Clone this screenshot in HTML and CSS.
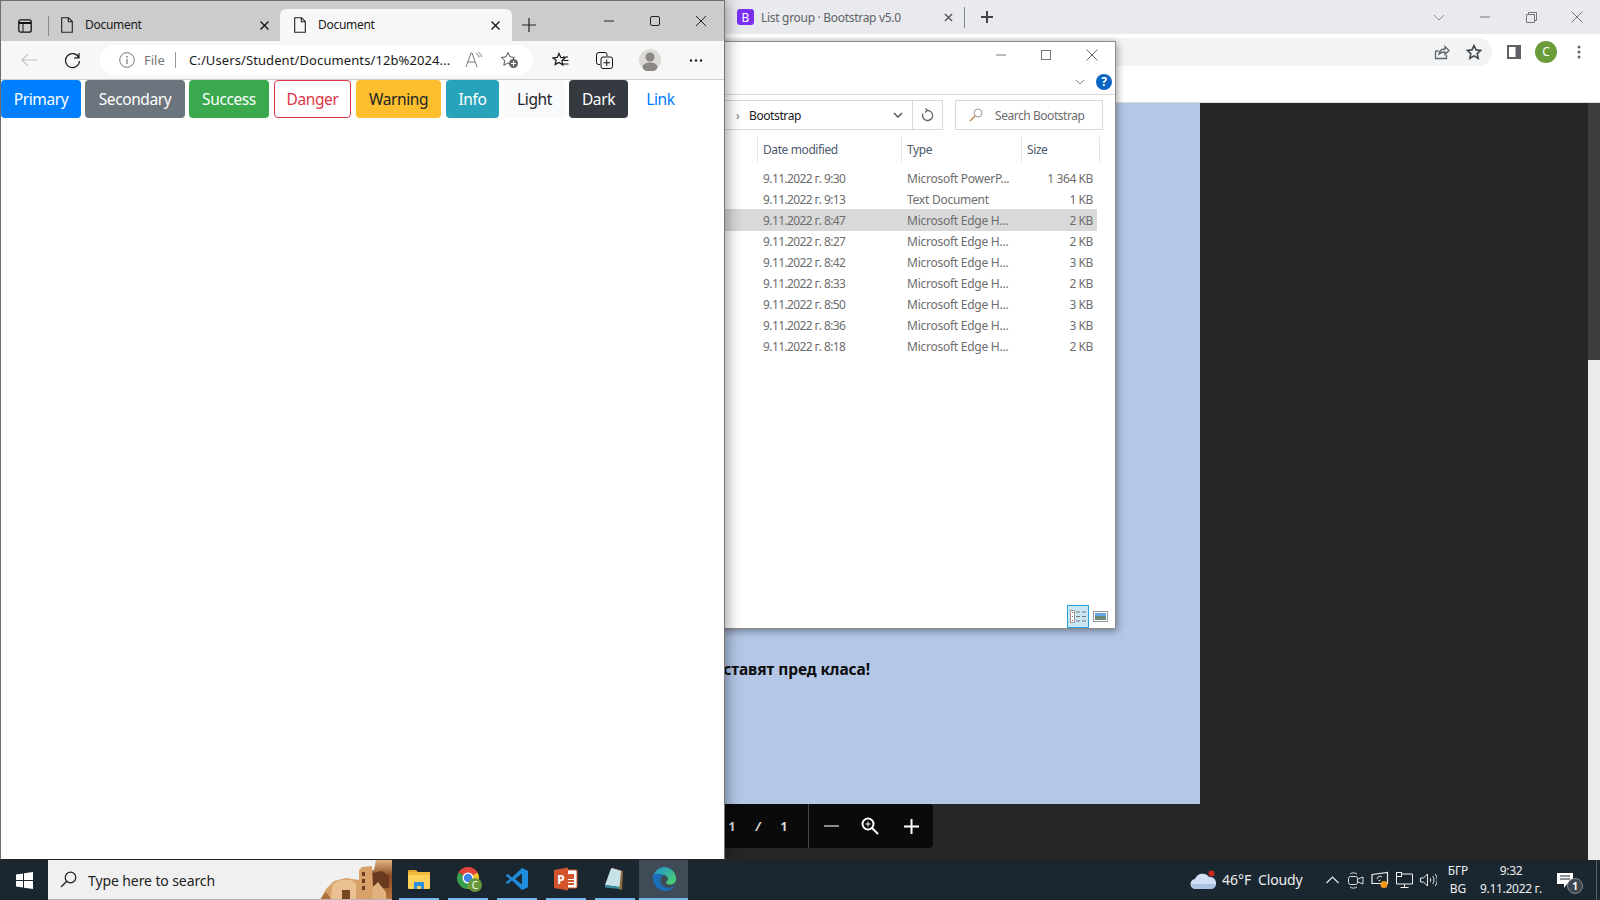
FILE: index.html
```html
<!DOCTYPE html>
<html lang="en">
<head>
    <meta charset="UTF-8">
    <title>Document</title>
    <link rel="stylesheet" href="styles.css">
</head>
<body>
<div class="desktop">

    <!-- chrome window with the pdf, furthest back -->
    <div class="chrome">
        <div class="chrome-tabs">
            <svg class="favicon" viewBox="0 0 17 16"><rect width="17" height="16" rx="3" fill="#7b2ff2"/><text x="8.5" y="12.5" text-anchor="middle" font-size="12" font-family="Noto Sans" fill="#fff">B</text></svg>
            <span class="chrome-tab-title">List group · Bootstrap v5.0</span>
            <svg class="chrome-tab-close" viewBox="0 0 10 10"><path d="M1 1l8 8M9 1l-8 8" stroke="#555" stroke-width="1.5"/></svg>
            <span class="chrome-tab-sep"></span>
            <svg class="chrome-new" viewBox="0 0 12 12"><path d="M6 0v12M0 6h12" stroke="#444" stroke-width="2"/></svg>
            <div class="chrome-controls">
                <svg class="caret" viewBox="0 0 12 7"><path d="M1 1l5 5 5-5" fill="none" stroke="#8a8a8a"/></svg>
                <span class="ctl"><svg width="10" height="2"><path d="M0 1h10" stroke="#777"/></svg></span>
                <span class="ctl"><svg width="11" height="11"><path d="M.5 2.5h8v8h-8zM2.5 2.5v-2h8v8h-2" fill="none" stroke="#777"/></svg></span>
                <span class="ctl"><svg width="12" height="12"><path d="M.5.5l11 11M11.500.5l-11 11" stroke="#777"/></svg></span>
            </div>
        </div>
        <div class="chrome-bar">
            <div class="omnibox">
                <svg class="omni-ico" viewBox="0 0 16 16"><path d="M1.500 7v7.500h11V11M1.500 7h3M5 10c.5-3 3-5 6-5V2.500l4 4-4 4V8c-2.500 0-4.500.5-6 2z" fill="none" stroke="#5f6368" stroke-width="1.300"/></svg>
                <svg class="omni-ico" viewBox="0 0 16 16"><path d="M8 1.500l2 4.400 4.700.5-3.500 3.200 1 4.700L8 11.900l-4.200 2.400 1-4.700L1.300 6.400 6 5.900z" fill="none" stroke="#44474a" stroke-width="1.600"/></svg>
            </div>
            <svg class="panel-ico" viewBox="0 0 14 14"><rect width="14" height="14" fill="#5f6368"/><rect x="2" y="2" width="6.500" height="10" fill="#fff"/></svg>
            <span class="chrome-avatar">C</span>
            <svg class="menu-ico" viewBox="0 0 4 14"><circle cx="2" cy="2" r="1.500" fill="#5f6368"/><circle cx="2" cy="7" r="1.500" fill="#5f6368"/><circle cx="2" cy="12" r="1.500" fill="#5f6368"/></svg>
        </div>
        <div class="chrome-bookmarks"></div>
        <div class="viewer">
            <div class="viewer-main">
                <div class="pdf-page">
                    <p class="pdf-text">ставят пред класа!</p>
                </div>
                <div class="pdf-tools">
                    <span class="pdf-num pdf-num-a">1</span>
                    <span class="pdf-num pdf-num-b">/</span>
                    <span class="pdf-num pdf-num-c">1</span>
                    <span class="pdf-tool pdf-minus"><svg width="15" height="2"><path d="M0 1h15" stroke="#8a8a8a" stroke-width="2"/></svg></span>
                    <span class="pdf-tool pdf-zoom"><svg width="18" height="18" viewBox="0 0 18 18"><circle cx="7" cy="7" r="5.500" fill="none" stroke="#fff" stroke-width="2"/><path d="M11 11l6 6" stroke="#fff" stroke-width="2"/><path d="M7 4.500v5M4.500 7h5" stroke="#fff"/></svg></span>
                    <span class="pdf-tool pdf-plus"><svg width="15" height="15"><path d="M7.500 0v15M0 7.500h15" stroke="#fff" stroke-width="2"/></svg></span>
                </div>
            </div>
            <div class="scrollbar"><div class="scroll-thumb"></div></div>
        </div>
    </div>

    <!-- explorer window -->
    <div class="explorer">
        <div class="x-title">
            <span class="x-ctl"><svg width="10" height="2"><path d="M0 1h10" stroke="#777"/></svg></span>
            <span class="x-ctl"><svg width="10" height="10"><rect x=".5" y=".5" width="9" height="9" fill="none" stroke="#777"/></svg></span>
            <span class="x-ctl"><svg width="12" height="12"><path d="M.5.5l11 11M11.500.5l-11 11" stroke="#666"/></svg></span>
        </div>
        <div class="x-ribbon">
            <svg class="x-chevron" viewBox="0 0 10 6"><path d="M1 1l4 4 4-4" fill="none" stroke="#888"/></svg>
            <span class="x-help">?</span>
        </div>
        <div class="x-nav">
            <div class="x-address">
                <span class="x-crumb-arrow">›</span>
                <span class="x-crumb">Bootstrap</span>
                <svg class="x-drop" viewBox="0 0 10 6"><path d="M1 1l4 4 4-4" fill="none" stroke="#555" stroke-width="1.500"/></svg>
                <span class="x-refresh"><svg width="13" height="14" viewBox="0 0 13 14"><path d="M6.500 2.500a5 5 0 1 1-4.500 3M6.500 2.500l-2-2M6.500 2.500l-2.500 2" fill="none" stroke="#666" stroke-width="1.300"/></svg></span>
            </div>
            <div class="x-search">
                <svg width="14" height="14" viewBox="0 0 14 14"><circle cx="9" cy="5" r="4" fill="none" stroke="#999"/><path d="M6 8l-5 5" stroke="#b5803c" stroke-width="1.300"/></svg>
                <span>Search Bootstrap</span>
            </div>
        </div>
        <div class="x-head">
            <span></span>
            <span class="x-col">Date modified</span>
            <span class="x-col">Type</span>
            <span class="x-col x-col-last">Size</span>
        </div>
        <div class="x-list">
            <div class="x-row"><span></span><span class="x-date">9.11.2022 г. 9:30</span><span class="x-type">Microsoft PowerP...</span><span class="x-size">1 364 KB</span></div>
            <div class="x-row"><span></span><span class="x-date">9.11.2022 г. 9:13</span><span class="x-type">Text Document</span><span class="x-size">1 KB</span></div>
            <div class="x-row x-selected"><span></span><span class="x-date">9.11.2022 г. 8:47</span><span class="x-type">Microsoft Edge H...</span><span class="x-size">2 KB</span></div>
            <div class="x-row"><span></span><span class="x-date">9.11.2022 г. 8:27</span><span class="x-type">Microsoft Edge H...</span><span class="x-size">2 KB</span></div>
            <div class="x-row"><span></span><span class="x-date">9.11.2022 г. 8:42</span><span class="x-type">Microsoft Edge H...</span><span class="x-size">3 KB</span></div>
            <div class="x-row"><span></span><span class="x-date">9.11.2022 г. 8:33</span><span class="x-type">Microsoft Edge H...</span><span class="x-size">2 KB</span></div>
            <div class="x-row"><span></span><span class="x-date">9.11.2022 г. 8:50</span><span class="x-type">Microsoft Edge H...</span><span class="x-size">3 KB</span></div>
            <div class="x-row"><span></span><span class="x-date">9.11.2022 г. 8:36</span><span class="x-type">Microsoft Edge H...</span><span class="x-size">3 KB</span></div>
            <div class="x-row"><span></span><span class="x-date">9.11.2022 г. 8:18</span><span class="x-type">Microsoft Edge H...</span><span class="x-size">2 KB</span></div>
        </div>
        <div class="x-foot">
            <span class="x-view x-view-on"><svg width="17" height="13" viewBox="0 0 17 13"><rect x=".5" y=".5" width="4" height="12" fill="#fff" stroke="#999"/><rect x="2" y="2" width="1" height="1" fill="#666"/><rect x="2" y="6" width="1" height="1" fill="#666"/><rect x="2" y="10" width="1" height="1" fill="#c33"/><path d="M6 2h4M12 2h4M6 6.500h4M12 6.500h4M6 11h4M12 11h4" stroke="#777"/></svg></span>
            <span class="x-view"><svg width="15" height="11" viewBox="0 0 15 11"><rect x=".5" y=".5" width="14" height="10" fill="#fff" stroke="#999"/><rect x="2" y="2" width="11" height="3" fill="#6aa7e8"/><rect x="2" y="5" width="11" height="4" fill="#6d8a78"/></svg></span>
        </div>
    </div>

    <!-- edge window, in front -->
    <div class="edge">
        <div class="edge-tabs">
            <svg class="edge-sidebar" viewBox="0 0 14 14"><rect x=".8" y=".8" width="12.400" height="12.400" rx="2" fill="none" stroke="#111" stroke-width="1.300"/><path d="M1 4h12" stroke="#111" stroke-width="2"/><path d="M5 4v9" stroke="#111"/></svg>
            <span class="edge-tabsep"></span>
            <div class="tab tab-back">
                <svg class="tab-doc" viewBox="0 0 12 16"><path d="M.7.7h6.800l3.800 3.800v10.800H.7zM7.300.7v4h4" fill="none" stroke="#222" stroke-width="1.100"/></svg>
                <span class="tab-title">Document</span>
                <svg class="tab-close" viewBox="0 0 9 9"><path d="M.5.5l8 8M8.500.5l-8 8" stroke="#111" stroke-width="1.300"/></svg>
            </div>
            <div class="tab tab-on">
                <svg class="tab-doc" viewBox="0 0 12 16"><path d="M.7.7h6.800l3.800 3.800v10.800H.7zM7.300.7v4h4" fill="none" stroke="#222" stroke-width="1.100"/></svg>
                <span class="tab-title">Document</span>
                <svg class="tab-close" viewBox="0 0 9 9"><path d="M.5.5l8 8M8.500.5l-8 8" stroke="#111" stroke-width="1.300"/></svg>
            </div>
            <svg class="edge-new" viewBox="0 0 14 14"><path d="M7 0v14M0 7h14" stroke="#222" stroke-width="1.200"/></svg>
            <div class="edge-controls">
                <span class="e-ctl"><svg width="10" height="2"><path d="M0 1h10" stroke="#222"/></svg></span>
                <span class="e-ctl"><svg width="10" height="10"><rect x=".5" y=".5" width="9" height="9" rx="1.500" fill="none" stroke="#222"/></svg></span>
                <span class="e-ctl"><svg width="10" height="10"><path d="M0 0l10 10M10 0L0 10" stroke="#222"/></svg></span>
            </div>
        </div>
        <div class="edge-bar">
            <svg class="e-back" viewBox="0 0 16 14"><path d="M16 7H1M7 1L1 7l6 6" fill="none" stroke="#c4c4c4" stroke-width="1.200"/></svg>
            <svg class="e-reload" viewBox="0 0 17 17"><path d="M14.800 5.500A7 7 0 1 0 15.500 9M15 1v4.800h-4.800" fill="none" stroke="#1c1c1c" stroke-width="1.200"/></svg>
            <div class="pill">
                <svg class="pill-info" viewBox="0 0 16 16"><circle cx="8" cy="8" r="7.300" fill="none" stroke="#777"/><path d="M8 7v5" stroke="#777" stroke-width="1.200"/><circle cx="8" cy="4.800" r=".9" fill="#777"/></svg>
                <span class="pill-file">File</span>
                <span class="pill-sep"></span>
                <span class="pill-url">C:/Users/Student/Documents/12b%2024...</span>
                <svg class="pill-read" viewBox="0 0 18 16"><path d="M1 15L6 1h1l5 14M3 10h7" fill="none" stroke="#777" stroke-width="1"/><path d="M11 1.500c2 .5 3 2 3 4M13.500.5c2 1 3 2.500 3 4.500" fill="none" stroke="#777"/></svg>
                <svg class="pill-fav" viewBox="0 0 19 18"><path d="M8 1.500l2 4.400 4.700.5-3.500 3.200 1 4.700L8 11.900l-4.200 2.400 1-4.700L1.300 6.400 6 5.900z" fill="none" stroke="#555"/><circle cx="13.500" cy="12.500" r="4.500" fill="#666"/><path d="M13.500 10v5M11 12.500h5" stroke="#fff"/></svg>
            </div>
            <svg class="e-favs" viewBox="0 0 17 16"><path d="M7 1.500l1.800 3.900 4.200.5-3.100 2.900.9 4.200L7 10.400l-3.800 2.100.9-4.200L1 5.900l4.200-.5z" fill="none" stroke="#111" stroke-width="1.200"/><path d="M11 5h5M11.500 8.500h5M10 12h6.500" stroke="#111"/></svg>
            <svg class="e-coll" viewBox="0 0 17 17"><path d="M4 12.500H2.500a2 2 0 0 1-2-2V3a2.500 2.500 0 0 1 2.500-2.500h6A2 2 0 0 1 11 2.500V4" fill="none" stroke="#111"/><rect x="5" y="5" width="11.500" height="11.500" rx="2" fill="none" stroke="#111"/><path d="M10.750 7.500v6.500M7.500 10.750H14" stroke="#111"/></svg>
            <span class="e-avatar"><svg width="22" height="22" viewBox="0 0 22 22"><circle cx="11" cy="11" r="11" fill="#dcdad7"/><circle cx="11" cy="8" r="4.500" fill="#8b8884"/><ellipse cx="11" cy="18" rx="7.500" ry="4.500" fill="#8b8884"/></svg></span>
            <svg class="e-more" viewBox="0 0 14 3"><circle cx="2" cy="1.500" r="1.200" fill="#222"/><circle cx="7" cy="1.500" r="1.200" fill="#222"/><circle cx="12" cy="1.500" r="1.200" fill="#222"/></svg>
        </div>
        <div class="edge-page">
            <button class="btn btn-primary">Primary</button>
            <button class="btn btn-secondary">Secondary</button>
            <button class="btn btn-success">Success</button>
            <button class="btn btn-danger">Danger</button>
            <button class="btn btn-warning">Warning</button>
            <button class="btn btn-info">Info</button>
            <button class="btn btn-light">Light</button>
            <button class="btn btn-dark">Dark</button>
            <button class="btn btn-link">Link</button>
        </div>
    </div>

    <!-- taskbar -->
    <div class="taskbar">
        <span class="start"><svg width="17" height="17" viewBox="0 0 17 17"><path d="M0 2.400L7 1.400v6.600H0zM8 1.200L17 0v8H8zM0 9h7v6.600L0 14.600zM8 9h9v8l-9-1.200z" fill="#fff"/></svg></span>
        <div class="search">
            <svg class="search-ico" viewBox="0 0 17 17"><circle cx="10.500" cy="6.500" r="5.300" fill="none" stroke="#222" stroke-width="1.200"/><path d="M6.700 10.300L1 16" stroke="#222" stroke-width="1.300"/></svg>
            <span class="search-text">Type here to search</span>
            <svg class="search-art" viewBox="0 0 72 40">
                <defs><linearGradient id="artBack" x1="0" y1="0" x2="0" y2="1"><stop offset="0" stop-color="#e4b384"/><stop offset=".4" stop-color="#8a4c24"/><stop offset="1" stop-color="#b9723c"/></linearGradient></defs>
                <path d="M56 0h16v40H44V12l10-2z" fill="url(#artBack)"/>
                <path d="M52 13l10-2 7 5v12H52z" fill="#6a3a1e"/>
                <path d="M0 40l6-11 8-8 12-3 13 2V10l3-3 10-1 1 20 7 1 8 13z" fill="#d8a16a"/>
                <path d="M13 24l7-4h11l5 4v16H10z" fill="#e9c193"/>
                <rect x="22" y="30" width="8" height="10" fill="#7a4522"/>
                <path d="M0 40l6-8 6 8z" fill="#b0703a"/>
                <rect x="42" y="12" width="3" height="4" fill="#6e3d1d"/>
                <rect x="42" y="19" width="3" height="4" fill="#6e3d1d"/>
                <rect x="42" y="26" width="3" height="4" fill="#6e3d1d"/>
                <path d="M53 27l5-5 3 4 5 6v8H52z" fill="#e2b17f"/>
            </svg>
        </div>
        <div class="task-icons">
            <span class="task"><svg width="22" height="20" viewBox="0 0 22 20"><path d="M0 2a1 1 0 0 1 1-1h7l2 2H0z" fill="#e2a52b"/><rect y="3" width="22" height="17" rx="1" fill="#fbd35a"/><rect y="3" width="22" height="3" fill="#f2bd3f"/><path d="M6 20v-7h10v7h-3v-3H9v3z" fill="#2a8fdc"/></svg></span>
            <span class="task task-chrome"><svg width="26" height="26" viewBox="0 0 26 26"><path d="M12 12L2.470 6.500A11 11 0 0 1 21.530 6.500z" fill="#e2463a"/><path d="M12 12L21.530 6.500A11 11 0 0 1 12 23z" fill="#fbc02d"/><path d="M12 12L12 23A11 11 0 0 1 2.470 6.500z" fill="#3a9f4c"/><circle cx="12" cy="12" r="5.500" fill="#fff"/><circle cx="12" cy="12" r="4.200" fill="#3f83ea"/><circle cx="19" cy="19" r="7" fill="#66983a"/><text x="19" y="22.500" text-anchor="middle" font-size="10" font-family="Noto Sans" fill="#fff">C</text></svg></span>
            <span class="task"><svg width="24" height="24" viewBox="0 0 24 24"><path d="M17 1l6 2.800v16.400L17 23 7 13.500 2.800 17 .5 15.500 5 12 .5 8.500 2.800 7 7 10.500z" fill="#1f8ddb"/><path d="M17 6.500L10 12l7 5.500z" fill="#1a2731"/></svg></span>
            <span class="task"><svg width="24" height="24" viewBox="0 0 24 24"><path d="M9 3h13a1 1 0 0 1 1 1v16a1 1 0 0 1-1 1H9z" fill="#fff" stroke="#d2552d"/><path d="M14 7h6v5h-6z" fill="#d2552d"/><path d="M14 14h6M14 17h6" stroke="#d2552d" stroke-width="2"/><path d="M0 3l14-2.500v23L0 21z" fill="#d2552d"/><text x="7" y="16.500" text-anchor="middle" font-size="12" font-weight="700" font-family="Noto Sans" fill="#fff">P</text></svg></span>
            <span class="task"><svg width="24" height="24" viewBox="0 0 24 24"><path d="M9 1l11 3-1 19-4-1z" fill="#8f6d3a"/><path d="M8 1.500l10 2.500-1.500 16-14.500-2z" fill="#c8e3e8"/><path d="M2 18l14.500 2 .5 2-15-1.500z" fill="#3c8f9f"/><path d="M8 1.500l1-.5 9 3h-1z" fill="#eef5f6"/></svg></span>
            <span class="task task-on"><svg width="26" height="26" viewBox="0 0 26 26"><defs><linearGradient id="edgeTop" x1="0" y1="0" x2="1" y2="1"><stop offset="0" stop-color="#1e8fd0"/><stop offset="1" stop-color="#4fd86a"/></linearGradient></defs><path d="M13 1a12 12 0 0 1 12 12c0 4-3 5.500-6 5.500-3 0-4-1-4-2.500 3-1 3-6-2-7-5-.5-9 2-11 5A12 12 0 0 1 13 1z" fill="url(#edgeTop)"/><path d="M2 9C0 19 8 25 14 25c5 0 8-2 10-5-5 3-12 2-14-2-2-4 0-8 3-9C8 7 4 8 2 9z" fill="#1c6eb7"/></svg></span>
        </div>
        <div class="tray">
            <svg class="tray-cloud" viewBox="0 0 26 20"><path d="M6 19a5 5 0 0 1-1-10 8 8 0 0 1 14-2 6 6 0 0 1 2 12z" fill="#cfe0f2"/><path d="M1 14a5 5 0 0 0 5 5h15a5 5 0 0 0 5-5z" fill="#aac4e3"/><circle cx="21.500" cy="3.500" r="3" fill="#c8291e"/></svg>
            <span class="tray-temp">46°F</span>
            <span class="tray-cond">Cloudy</span>
            <span class="tray-ico"><svg width="13" height="8" viewBox="0 0 13 8"><path d="M.5 7l6-6 6 6" fill="none" stroke="#e8e8e8" stroke-width="1.200"/></svg></span>
            <span class="tray-ico"><svg width="16" height="17" viewBox="0 0 16 17"><rect x=".5" y="4.500" width="9" height="8" rx="2" fill="none" stroke="#ddd"/><path d="M10 7l5-2v7l-5-2M2 2c2-1.500 5-1.500 7 0M2 15c2 1.500 5 1.500 7 0" fill="none" stroke="#ddd"/></svg></span>
            <span class="tray-ico"><svg width="18" height="18" viewBox="0 0 18 18"><path d="M1 3.500L16.500 1.500v11H1z" fill="none" stroke="#eee" stroke-width="1.200"/><path d="M6 8a3 3 0 0 1 5-2M9.500 9l-2 1" fill="none" stroke="#eee"/><circle cx="13" cy="13.500" r="3.500" fill="#f59a12"/></svg></span>
            <span class="tray-ico"><svg width="17" height="17" viewBox="0 0 17 17"><rect x=".5" y=".5" width="5" height="4" fill="#1a2731" stroke="#eee"/><path d="M.5 3v9h16V2H5.500M8.500 12v3.500M4.500 15.500h8" fill="none" stroke="#eee"/></svg></span>
            <span class="tray-ico"><svg width="17" height="14" viewBox="0 0 17 14"><path d="M.5 5h3l4-4v12l-4-4h-3zM10 5c1 1 1 3 0 4M12.500 3c2 2 2 6 0 8M15 1c3 3 3 9 0 12" fill="none" stroke="#eee"/></svg></span>
            <div class="tray-ime"><span>БГР</span><span>BG</span></div>
            <div class="tray-clock"><span>9:32</span><span>9.11.2022 г.</span></div>
            <div class="tray-notif">
                <svg width="17" height="15" viewBox="0 0 17 15"><path d="M0 0h16v11h-6l-3 4v-4H0z" fill="#fff"/><path d="M3 3h10M3 6h10" stroke="#1a2731"/></svg>
                <span class="notif-badge">1</span>
            </div>
            <span class="tray-edge"></span>
        </div>
    </div>
</div>
</body>
</html>
```

FILE: styles.css
```css
* {
    margin: 0;
    padding: 0;
    box-sizing: border-box;
}

body {
    font-family: "Noto Sans", sans-serif;
    overflow: hidden;
    background: #262626;
}

svg {
    display: block;
    flex-shrink: 0;
}

.desktop {
    position: relative;
    width: 1600px;
    height: 900px;
    overflow: hidden;
}

/* chrome */
.chrome {
    position: absolute;
    left: 724px;
    top: 0;
    width: 876px;
    height: 860px;
    display: flex;
    flex-direction: column;
}

.chrome-tabs {
    height: 34px;
    background: #e8eaed;
    display: flex;
    align-items: center;
    padding-left: 13px;
}

.favicon {
    width: 17px;
    height: 16px;
}

.chrome-tab-title {
    margin-left: 7px;
    width: 180px;
    font-size: 12px;
    letter-spacing: -0.3px;
    color: #5f6368;
    white-space: nowrap;
}

.chrome-tab-close {
    width: 9px;
    height: 9px;
    margin-left: 3px;
}

.chrome-tab-sep {
    width: 1px;
    height: 21px;
    background: #80868b;
    margin-left: 11px;
}

.chrome-new {
    width: 12px;
    height: 12px;
    margin-left: 16px;
}

.chrome-controls {
    margin-left: auto;
    display: flex;
    align-items: center;
}

.caret {
    width: 12px;
    height: 7px;
    margin-right: 17px;
}

.ctl {
    width: 46px;
    height: 34px;
    display: flex;
    align-items: center;
    justify-content: center;
}

.chrome-bar {
    height: 34px;
    background: #fff;
    padding-top: 2px;
    display: flex;
    align-items: center;
}

.omnibox {
    width: 768px;
    height: 28px;
    background: #f1f3f4;
    border-radius: 0 14px 14px 0;
    display: flex;
    align-items: center;
    justify-content: flex-end;
    gap: 16px;
    padding-right: 10px;
}

.omni-ico {
    width: 16px;
    height: 16px;
}

.panel-ico {
    width: 14px;
    height: 14px;
    margin-left: 15px;
}

.chrome-avatar {
    width: 22px;
    height: 22px;
    margin-left: 14px;
    border-radius: 50%;
    background: #6a9c3a;
    color: #fff;
    font-size: 12px;
    line-height: 22px;
    text-align: center;
}

.menu-ico {
    width: 4px;
    height: 14px;
    margin-left: 20px;
}

.chrome-bookmarks {
    height: 35px;
    background: #fff;
    border-bottom: 1px solid #dadce0;
}

.viewer {
    flex: 1;
    display: flex;
    background: #262626;
}

.viewer-main {
    flex: 1;
    position: relative;
}

.pdf-page {
    width: 476px;
    height: 701px;
    background: #b4c7e7;
    padding: 554px 330px 0 0;
}

.pdf-text {
    display: flex;
    justify-content: flex-end;
    font-size: 15.5px;
    font-weight: 700;
    letter-spacing: -0.1px;
    line-height: 24px;
    color: #0d0d0d;
    white-space: nowrap;
}

.pdf-tools {
    position: absolute;
    left: 0;
    top: 701px;
    width: 209px;
    height: 44px;
    background: #0a0a0a;
    border-radius: 0 4px 4px 0;
    display: flex;
    align-items: center;
}

.pdf-num {
    color: #ddd;
    font-size: 12px;
    font-weight: 700;
    text-align: center;
}

.pdf-num-a {
    width: 16px;
}

.pdf-num-b {
    width: 36px;
    font-style: italic;
}

.pdf-num-c {
    width: 16px;
    margin-right: 16px;
}

.pdf-tool {
    height: 44px;
    display: flex;
    align-items: center;
    justify-content: center;
}

.pdf-minus {
    width: 46px;
    border-left: 1px solid #444;
}

.pdf-zoom {
    width: 32px;
}

.pdf-plus {
    width: 47px;
    padding-left: 3px;
}

.scrollbar {
    width: 12px;
    background: #3c3c3c;
    padding-top: 257px;
}

.scroll-thumb {
    height: 100%;
    background: #ebebeb;
}

/* explorer */
.explorer {
    position: absolute;
    left: 700px;
    top: 41px;
    width: 416px;
    height: 588px;
    background: #fff;
    border: 1px solid #8c8c8c;
    box-shadow: 1px 2px 8px rgba(0, 0, 0, 0.4);
    display: flex;
    flex-direction: column;
}

.x-title {
    height: 26px;
    display: flex;
    justify-content: flex-end;
    align-items: center;
    padding-right: 1px;
}

.x-ctl {
    width: 45px;
    display: flex;
    justify-content: center;
}

.x-ctl:last-child {
    margin-left: 1px;
}

.x-ribbon {
    height: 27px;
    display: flex;
    justify-content: flex-end;
    align-items: center;
    border-bottom: 1px solid #dadada;
    padding: 1px 3px 0 0;
    gap: 11px;
}

.x-chevron {
    width: 10px;
    height: 6px;
}

.x-help {
    width: 16px;
    height: 16px;
    border-radius: 50%;
    background: #0a66c2;
    color: #fff;
    font-size: 12px;
    font-weight: 700;
    line-height: 16px;
    text-align: center;
}

.x-nav {
    display: flex;
    margin-top: 5px;
    height: 30px;
    font-size: 12px;
    padding-right: 12px;
}

.x-address {
    width: 242px;
    border: 1px solid #d9d9d9;
    border-left: none;
    display: flex;
    align-items: center;
    padding-left: 35px;
    color: #1a1a1a;
}

.x-crumb-arrow {
    width: 13px;
    color: #666;
}

.x-crumb {
    width: 144px;
    letter-spacing: -0.4px;
}

.x-drop {
    width: 10px;
    height: 6px;
}

.x-refresh {
    margin-left: 9px;
    width: 30px;
    height: 28px;
    border-left: 1px solid #d9d9d9;
    display: flex;
    align-items: center;
    justify-content: center;
}

.x-search {
    margin-left: 12px;
    flex: 1;
    border: 1px solid #d9d9d9;
    display: flex;
    align-items: center;
    gap: 12px;
    padding-left: 13px;
    color: #6d6d6d;
    white-space: nowrap;
    letter-spacing: -0.45px;
}

.x-head {
    display: grid;
    grid-template-columns: 56px 144px 120px 79px;
    margin-top: 7px;
    height: 25px;
    font-size: 12px;
    letter-spacing: -0.4px;
    color: #4c5a6b;
    line-height: 25px;
}

.x-col {
    border-left: 1px solid #e5e5e5;
    padding-left: 5px;
}

.x-col-last {
    border-right: 1px solid #e5e5e5;
}

.x-list {
    margin-top: 6px;
}

.x-row {
    display: grid;
    grid-template-columns: 56px 144px 120px 76px;
    width: 396px;
    height: 21px;
    font-size: 12px;
    line-height: 21px;
    color: #6d6d6d;
    white-space: nowrap;
}

.x-row span {
    padding-left: 6px;
}

.x-row .x-date {
    letter-spacing: -0.6px;
}

.x-row .x-type {
    letter-spacing: -0.25px;
}

.x-row .x-size {
    padding: 0 4px 0 0;
    letter-spacing: -0.4px;
    text-align: right;
}

.x-selected {
    background: #d9d9d9;
    height: 22px;
    margin-top: -1px;
    line-height: 23px;
}

.x-foot {
    margin-top: auto;
    display: flex;
    align-items: flex-end;
    justify-content: flex-end;
    padding-right: 4px;
}

.x-view {
    width: 22px;
    height: 23px;
    display: flex;
    align-items: center;
    justify-content: center;
}

.x-view-on {
    background: #c9e6f5;
    border: 1px solid #2a9fe0;
}

/* edge */
.edge {
    position: absolute;
    left: 0;
    top: 0;
    width: 725px;
    height: 860px;
    background: #fff;
    border: 1px solid #6e6e6e;
    border-bottom-color: #222;
    border-right: 1px solid #777;
    box-shadow: 2px 0 14px rgba(0, 0, 0, 0.4);
    display: flex;
    flex-direction: column;
}

.edge-tabs {
    height: 40px;
    background: #ccc;
    display: flex;
    align-items: flex-end;
}

.edge-sidebar {
    width: 14px;
    height: 14px;
    margin: 0 0 8px 17px;
}

.edge-tabsep {
    width: 1px;
    height: 20px;
    background: #8a8a8a;
    margin: 0 0 5px 16px;
}

.tab {
    width: 232px;
    height: 32px;
    display: flex;
    align-items: center;
    gap: 12px;
    padding: 0 12px 0 14px;
    font-size: 12px;
    letter-spacing: -0.3px;
    color: #1a1a1a;
}

.tab-back {
    width: 231px;
    padding-left: 12px;
    padding-right: 11px;
}

.tab-on {
    background: #f7f7f7;
    border-radius: 6px 6px 0 0;
}

.tab-doc {
    width: 12px;
    height: 16px;
}

.tab-title {
    flex: 1;
    margin-bottom: 2px;
}

.tab-close {
    width: 9px;
    height: 9px;
}

.edge-new {
    width: 14px;
    height: 14px;
    margin: 0 0 9px 10px;
}

.edge-controls {
    margin-left: auto;
    display: flex;
    align-self: flex-start;
}

.e-ctl {
    width: 46px;
    height: 40px;
    display: flex;
    align-items: center;
    justify-content: center;
}

.edge-bar {
    height: 39px;
    background: #f7f7f7;
    border-bottom: 1px solid #cfcfcf;
    display: flex;
    align-items: center;
}

.e-back {
    width: 16px;
    height: 14px;
    margin-left: 20px;
}

.e-reload {
    width: 17px;
    height: 17px;
    margin-left: 27px;
}

.pill {
    width: 433px;
    height: 30px;
    margin-left: 19px;
    background: #fff;
    border-radius: 15px;
    display: flex;
    align-items: center;
    padding-left: 19px;
}

.pill-info {
    width: 16px;
    height: 16px;
}

.pill-file {
    margin-left: 9px;
    font-size: 13px;
    color: #777;
    width: 31px;
}

.pill-sep {
    width: 1px;
    height: 16px;
    background: #999;
}

.pill-url {
    margin-left: 13px;
    width: 270px;
    font-size: 13px;
    letter-spacing: 0.1px;
    color: #1a1a1a;
    white-space: nowrap;
}

.pill-read {
    width: 18px;
    height: 16px;
    margin-left: 6px;
}

.pill-fav {
    width: 19px;
    height: 18px;
    margin-left: 17px;
}

.e-favs {
    width: 17px;
    height: 16px;
    margin-left: 19px;
}

.e-coll {
    width: 17px;
    height: 17px;
    margin-left: 27px;
}

.e-avatar {
    margin-left: 26px;
}

.e-more {
    width: 14px;
    height: 3px;
    margin-left: 28px;
}

.edge-page {
    display: flex;
    gap: 4px;
}

.btn {
    height: 38px;
    border: 1px solid transparent;
    border-radius: 4px;
    font-family: "Noto Sans", sans-serif;
    font-size: 15.5px;
    letter-spacing: -0.4px;
    text-align: center;
    background: none;
}

.btn-primary {
    width: 80px;
    background: #0080ff;
    color: #fff;
}

.btn-secondary {
    width: 100px;
    background: #6c757d;
    color: #fff;
}

.btn-success {
    width: 80px;
    background: #3aa84d;
    color: #fff;
}

.btn-danger {
    width: 77px;
    margin-left: 1px;
    border-color: #dc3545;
    color: #dc3545;
}

.btn-warning {
    width: 85px;
    margin-left: 1px;
    background: #fdbf2d;
    color: #212529;
}

.btn-info {
    width: 53px;
    margin-left: 1px;
    background: #27a3bb;
    color: #fff;
}

.btn-light {
    width: 61px;
    margin-left: 1px;
    background: #f8f9fa;
    color: #212529;
}

.btn-dark {
    width: 59px;
    background: #343a40;
    color: #fff;
}

.btn-link {
    width: 57px;
    color: #007bff;
}

/* taskbar */
.taskbar {
    position: absolute;
    left: 0;
    bottom: 0;
    width: 1600px;
    height: 40px;
    background: #1a2731;
    display: flex;
}

.start {
    width: 48px;
    display: flex;
    align-items: center;
    justify-content: center;
}

.search {
    width: 344px;
    background: #f0f0f0;
    border-bottom: 1px solid #b5b5b5;
    display: flex;
    align-items: center;
    overflow: hidden;
}

.search-ico {
    width: 17px;
    height: 17px;
    margin-left: 12px;
}

.search-text {
    margin: 2px 0 0 11px;
    font-size: 14px;
    color: #222;
    letter-spacing: -0.1px;
    white-space: nowrap;
}

.search-art {
    width: 72px;
    height: 40px;
    margin-left: auto;
}

.task-icons {
    display: flex;
    padding-left: 2px;
}

.task {
    width: 40px;
    margin: 0 4.5px;
    border-bottom: 2px solid #76b9ed;
    display: flex;
    align-items: center;
    justify-content: center;
}

.task-chrome {
    padding-left: 3px;
}

.task-on {
    width: 49px;
    margin: 0;
    background: #3f4c58;
}

.tray {
    margin-left: auto;
    width: 412px;
    display: flex;
    align-items: center;
    color: #eee;
    padding-left: 2px;
}

.tray-cloud {
    width: 26px;
    height: 20px;
}

.tray-temp {
    width: 36px;
    margin: 0 0 2px 6px;
    font-size: 14px;
    white-space: nowrap;
}

.tray-cond {
    width: 62px;
    margin-bottom: 2px;
    font-size: 14px;
    letter-spacing: -0.15px;
}

.tray-ico {
    width: 24px;
    display: flex;
    justify-content: center;
}

.tray-ime,
.tray-clock {
    display: flex;
    flex-direction: column;
    align-items: center;
    font-size: 12px;
    line-height: 18px;
}

.tray-ime {
    width: 36px;
}

.tray-clock {
    width: 70px;
    letter-spacing: -0.3px;
    white-space: nowrap;
}

.tray-notif {
    position: relative;
    width: 42px;
    margin-left: -2px;
    display: flex;
    justify-content: center;
}

.notif-badge {
    position: absolute;
    left: 23px;
    top: 5px;
    width: 16px;
    height: 16px;
    border-radius: 50%;
    border: 1px solid #888;
    background: #3c4650;
    color: #fff;
    font-size: 10px;
    font-weight: 700;
    line-height: 14px;
    text-align: center;
}

.tray-edge {
    width: 1px;
    height: 40px;
    background: #55606a;
    margin-left: 10px;
}
```
